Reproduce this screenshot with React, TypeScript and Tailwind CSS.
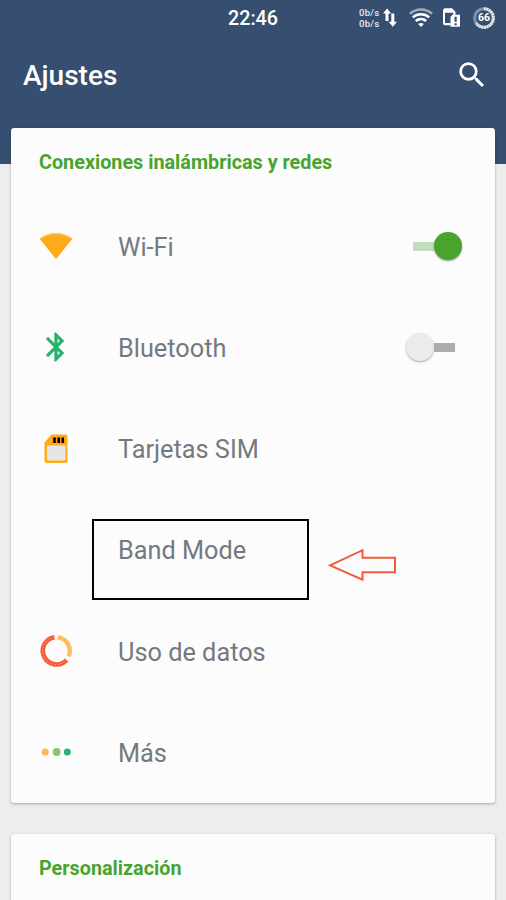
import React, { useState } from "react";

const NetworkSpeed = () => (
  <div className="flex items-center">
    <div className="flex w-[24px] flex-col text-[9.6px] font-medium leading-[11px] tracking-[0.25px] text-[#e4e8ec] whitespace-nowrap">
      <span>0b/s</span>
      <span>0b/s</span>
    </div>
    <svg className="w-[14px] h-[20px]" viewBox="0 0 14 20" fill="#fff">
      <path d="M4 .6L8.200 5.600H5.500V13H2.500V5.600H0z" />
      <path d="M9.8 18.800L5.6 13.800H8.300V5.500H11.300V13.800H14z" />
    </svg>
  </div>
);

const WifiSignalIcon = () => (
  <svg className="w-[24px] h-[20px]" viewBox="0 0 24 20" fill="none" strokeWidth="2.6">
    <path d="M1 5.800C7.2 .1 16.8 .1 23 5.800" stroke="#a0abb9" />
    <path d="M3.800 9.4C8.4 5.2 15.600 5.2 20.200 9.4" stroke="#fff" />
    <path d="M6.900 13C9.700 10.300 14.300 10.300 17.100 13" stroke="#fff" />
    <path d="M12 19L9.2 16.1Q12 13.800 14.8 16.1z" fill="#fff" />
  </svg>
);

const SimAlertIcon = () => (
  <svg className="w-[18px] h-[20px]" viewBox="0 0 18 20">
    <path d="M0 2L1.500 .3H9L12.500 3.800V7H10.300V4.800H2V15H7.500V17.200H1.500L0 16z" fill="#fff" />
    <path d="M7.500 9L9.500 6.800H17V18.800H7.5z" fill="#fff" />
    <path d="M11.5 8.800H13.7V13.800H11.5zM11.5 15.200H13.7V17.300H11.5z" fill="#364f70" />
  </svg>
);

const BatteryRing = () => (
  <div className="relative flex h-[22px] w-[22px] items-center justify-center">
    <svg className="absolute inset-0 h-[22px] w-[22px]" viewBox="0 0 22 22" fill="none" strokeWidth="3">
      <circle cx="11" cy="11" r="9.3" stroke="#8492a5" />
      <path
        d="M11 1.7A9.3 9.3 0 1 1 3.3 16.2"
        stroke="#e8ebef"
        strokeDasharray="1.9 .55"
      />
    </svg>
    <span className="relative text-[10.5px] leading-none font-bold text-white">66</span>
  </div>
);

const SearchIcon = () => (
  <svg className="h-[34px] w-[34px]" viewBox="0 0 24 24" fill="#fff">
    <path d="M15.5 14h-.79l-.28-.27A6.471 6.471 0 0 0 16 9.5 6.5 6.5 0 1 0 9.5 16c1.61 0 3.09-.59 4.23-1.57l.27.28v.79l5 4.99L20.49 19l-4.99-5zm-6 0C7.01 14 5 11.99 5 9.5S7.01 5 9.5 5 14 7.01 14 9.5 11.99 14 9.5 14z" />
  </svg>
);

const WifiIcon = () => (
  <svg className="h-[34px] w-[34px]" viewBox="0 0 34 34">
    <path d="M17 30L.6 9.8C9.5 2.3 24.5 2.3 33.4 9.8z" fill="#ffab19" />
    <path d="M2 9.6C10.5 3 23.5 3 32 9.6" fill="none" stroke="#ffc869" strokeWidth="2" strokeDasharray="1 1" />
  </svg>
);

const BluetoothIcon = () => (
  <svg className="h-[34px] w-[34px]" viewBox="0 0 24 24" fill="#27b36d" stroke="#27b36d" strokeWidth=".3">
    <path d="M17.71 7.71L12 2h-1v7.59L6.41 5 5 6.41 10.59 12 5 17.59 6.41 19 11 14.41V22h1l5.71-5.71-4.3-4.29 4.3-4.29zM13 5.83l1.88 1.88L13 9.59V5.83zm1.88 10.46L13 18.17v-3.76l1.88 1.88z" />
  </svg>
);

const SimIcon = () => (
  <svg className="h-[34px] w-[34px]" viewBox="0 0 34 34">
    <path d="M12.500 2.5H26.5Q28.5 2.5 28.5 4.5V28.5Q28.5 31 26.5 31H7.500Q5.500 31 5.500 28.5V10.5z" fill="#ffab19" />
    <rect x="8" y="13.5" width="18.500" height="15" rx="1" fill="#e6e6e6" />
    <path d="M14.2 5.5H16.8V11H14.2zM18.4 5.5H21V11H18.4zM22.5 5.5H25.1V11H22.5z" fill="#000" />
    <path d="M13.5 5.5V11.5M17.6 5.5V11.5M21.7 5.5V11.5" stroke="#f0652d" strokeWidth=".7" strokeDasharray="1 1" />
  </svg>
);

const DataUsageIcon = () => (
  <svg className="h-[34px] w-[34px]" viewBox="0 0 34 34" fill="none" strokeWidth="4.6">
    <path d="M15.5 3.2A13.7 13.7 0 1 0 27.6 26" stroke="#f5583b" />
    <path d="M18.8 3.2A13.7 13.7 0 0 1 29.6 22.3" stroke="#fcc070" />
    <path d="M15 3.3A13.7 13.7 0 1 0 27.4 26" stroke="#ffb163" strokeWidth="1.1" strokeDasharray="1.1 1.9" />
    <path d="M19.8 3.6A13.7 13.7 0 0 1 29.8 21.5" stroke="#ffa62b" strokeWidth="1.3" strokeDasharray="1.1 1.9" />
  </svg>
);

const MoreIcon = () => (
  <svg className="h-[34px] w-[34px]" viewBox="0 0 34 34">
    <circle cx="6.2" cy="17" r="3.6" fill="#fcb95c" />
    <circle cx="17.6" cy="17" r="4" fill="#8cc474" />
    <circle cx="28.3" cy="17" r="3.5" fill="#27b36d" />
  </svg>
);

const Toggle = ({ defaultOn }: { defaultOn: boolean }) => {
  const [on, setOn] = useState(defaultOn);

  return (
    <button
      role="switch"
      aria-checked={on}
      onClick={() => setOn(!on)}
      className={
        on
          ? "flex w-[56px] items-center justify-end"
          : "flex w-[56px] items-center justify-start"
      }
    >
      {on && <span className="h-[9px] w-[21px] bg-[#c3dcc0]" />}
      <span
        className={
          on
            ? "h-[28px] w-[28px] rounded-full bg-[#49a42e] shadow-[0_1px_2px_rgba(0,0,0,0.4)]"
            : "h-[28px] w-[28px] rounded-full bg-[#ebebeb] shadow-[0_1px_2px_rgba(0,0,0,0.35)]"
        }
      />
      {!on && <span className="h-[9px] w-[21px] bg-[#adadad]" />}
    </button>
  );
};

const rows = [
  { label: "Wi-Fi", icon: <WifiIcon />, toggle: true },
  { label: "Bluetooth", icon: <BluetoothIcon />, toggle: false },
  { label: "Tarjetas SIM", icon: <SimIcon /> },
  { label: "Band Mode", highlighted: true },
  { label: "Uso de datos", icon: <DataUsageIcon /> },
  { label: "Más", icon: <MoreIcon /> },
];

const Highlight = () => (
  <>
    <div className="absolute left-[81px] top-[20px] h-[81px] w-[217px] border-2 border-black" />
    <svg className="absolute left-[317px] top-[49px] h-[34px] w-[70px]" viewBox="0 0 70 34">
      <path d="M2 17.4L34.5 2.2V9.7H67V24.3H34.5V31.7z" fill="none" stroke="#f5583b" strokeWidth="2" />
    </svg>
  </>
);

export default function App() {
  return (
    <div className="h-[900px] w-[506px] overflow-hidden bg-[#ededed] font-['Roboto',sans-serif]">
      <header className="h-[164px] bg-[#364f70] text-white">
        <div className="flex h-[36px] items-center justify-between pl-[228px] pr-[11px]">
          <span className="pt-0.5 text-[19.7px] font-medium">22:46</span>
          <div className="flex items-center">
            <NetworkSpeed />
            <div className="ml-3">
              <WifiSignalIcon />
            </div>
            <div className="ml-2.5">
              <SimAlertIcon />
            </div>
            <div className="ml-3">
              <BatteryRing />
            </div>
          </div>
        </div>
        <div className="flex h-[80px] items-center justify-between pl-[23px] pr-[17px]">
          <h1 className="text-[28px] font-medium">Ajustes</h1>
          <button className="-mt-0.5">
            <SearchIcon />
          </button>
        </div>
      </header>

      <main className="relative -mt-9 flex flex-col gap-[31px] px-[11px]">
        <section className="h-[675px] rounded-[3px] bg-[#fcfcfc] shadow-[0_1px_3px_rgba(0,0,0,0.3)]">
          <h2 className="flex h-[67.5px] items-center pl-7 pt-0.5 text-[19.8px] font-bold text-[#49a42e]">
            Conexiones inalámbricas y redes
          </h2>
          {rows.map((row) => (
            <div
              key={row.label}
              className="relative flex h-[101.25px] items-center pl-7 pr-[33px]"
            >
              <div className="w-[79px]">{row.icon}</div>
              <span className="flex-1 pt-[3px] text-[25.3px] text-[#74797f]">{row.label}</span>
              {row.toggle !== undefined && <Toggle defaultOn={row.toggle} />}
              {row.highlighted && <Highlight />}
            </div>
          ))}
        </section>

        <section className="h-[120px] rounded-[3px] bg-[#fcfcfc] shadow-[0_1px_3px_rgba(0,0,0,0.3)]">
          <h2 className="flex h-[67.5px] items-center pl-7 pt-0.5 text-[19.8px] font-bold text-[#49a42e]">
            Personalización
          </h2>
        </section>
      </main>
    </div>
  );
}
